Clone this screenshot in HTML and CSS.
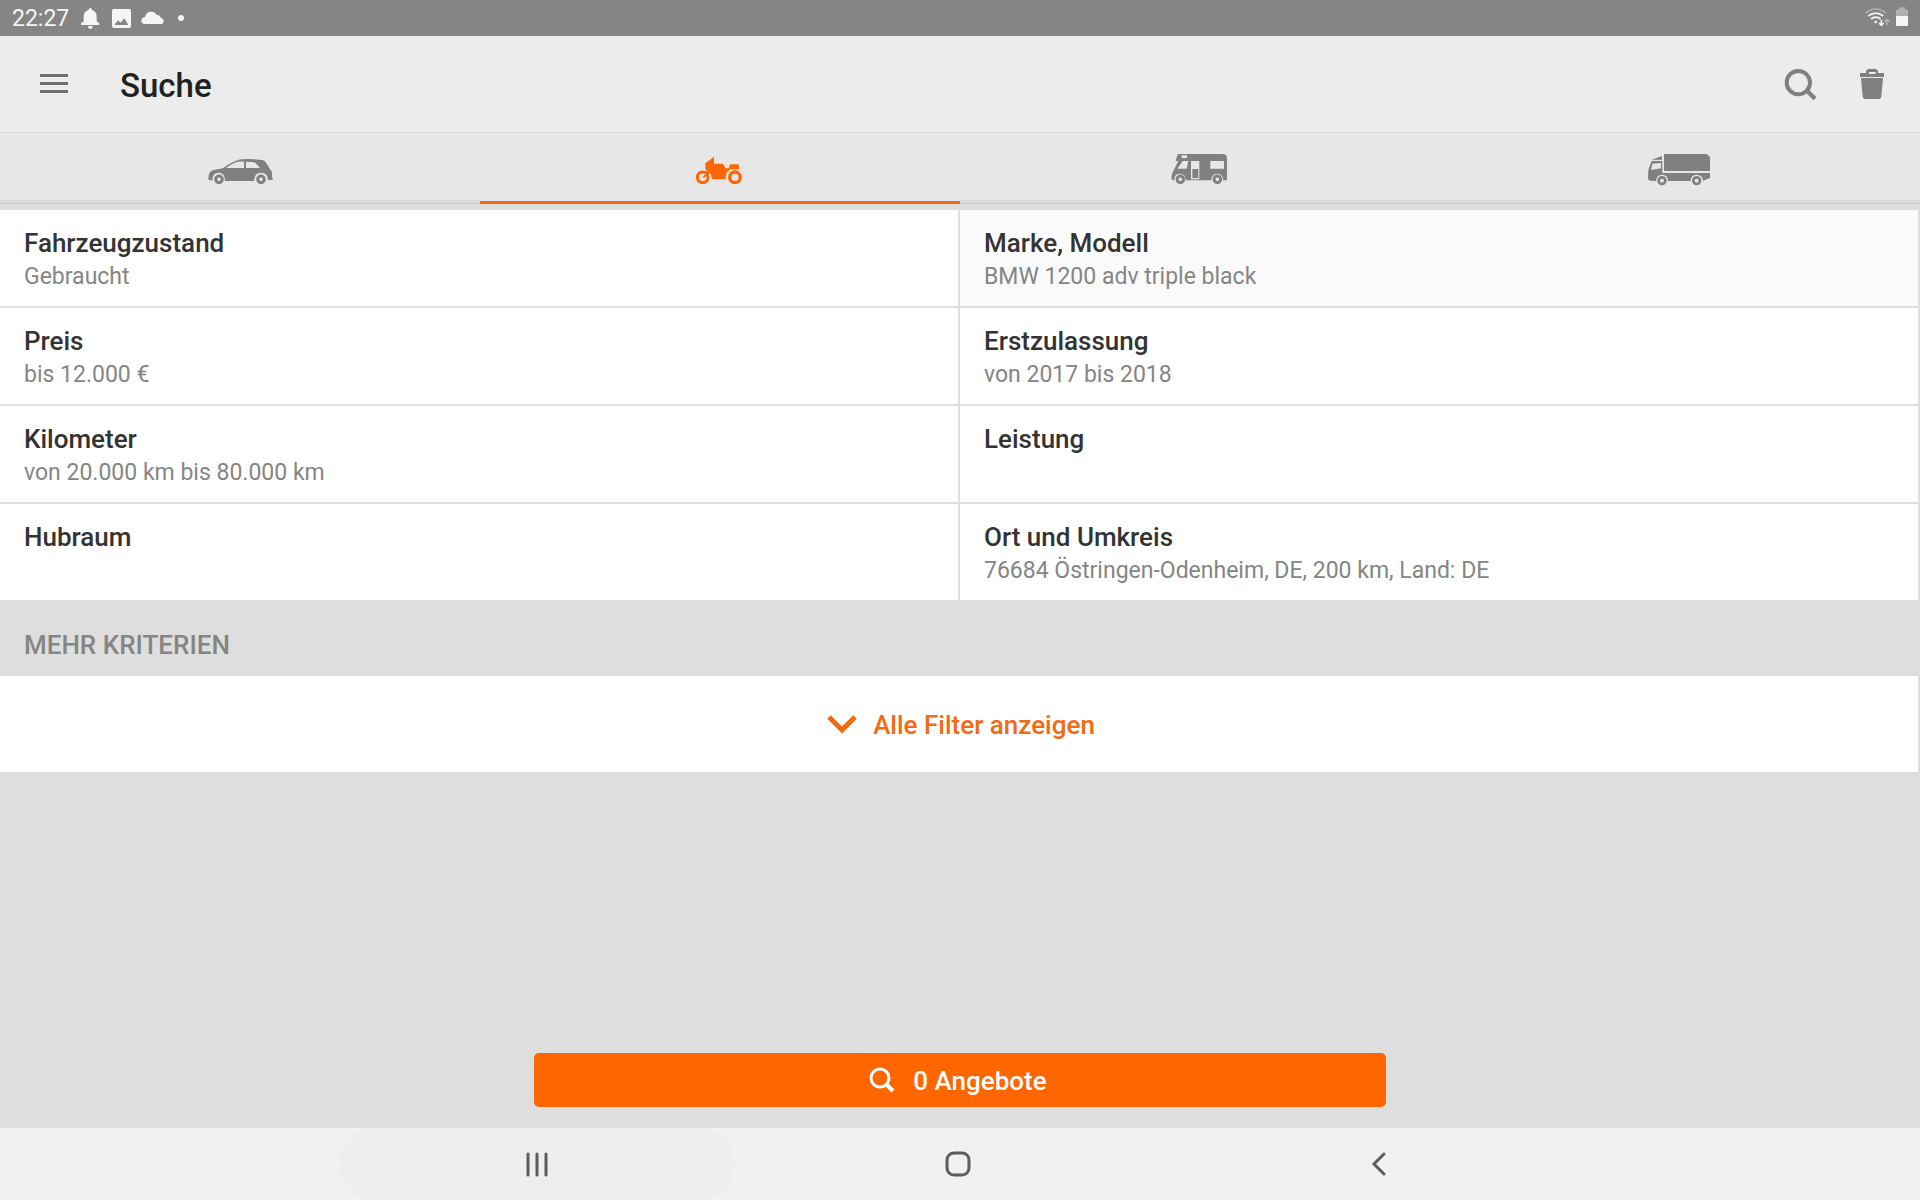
FILE: index.html
```html
<!DOCTYPE html>
<html lang="de">
<head>
    <meta charset="UTF-8">
    <meta name="viewport" content="width=device-width, initial-scale=1.0">
    <title>Suche</title>
    <link rel="stylesheet" href="styles.css">
</head>
<body>
    <div class="statusbar">
        <span class="clock">22:27</span>
        <svg width="20" height="36" viewBox="240 0 60 108">
            <path fill="#f5f5f5" d="M267 29v-2q0-3 4-3t4 3v2q14 4 15 19v16l8 6v5h-55v-5l8-6V48q1-15 16-19zM264 78h14q-1 9-7 9t-7-9z"/>
        </svg>
        <svg width="22" height="36" viewBox="327 0 66 108">
            <rect x="336" y="27" width="57" height="57" rx="6" fill="#f5f5f5"/>
            <path fill="#858585" d="M343 75l11-14 7 7 12-13 12 20z"/>
        </svg>
        <svg width="25" height="36" viewBox="420 0 75 108">
            <path fill="#f5f5f5" d="M434 72q-10-1-10-10 0-9 11-11 4-16 18-16 13 0 17 10 9-2 13 8 8 3 8 10 0 8-8 9z"/>
        </svg>
        <svg width="12" height="36" viewBox="522 0 36 108">
            <circle cx="543" cy="54" r="9" fill="#f5f5f5"/>
        </svg>
        <span class="spacer"></span>
        <svg class="wifi" width="25" height="36" viewBox="375 0 75 108">
            <g fill="none" stroke-width="5">
                <path stroke="#b0b0b0" d="M378 39q29-24 59 0"/>
                <path stroke="#f5f5f5" d="M385 48q22-17 45 0M393 57q14-11 29 0"/>
                <path stroke="#f5f5f5" d="M424 60v15M417 69l7 7 7-7"/>
                <path stroke="#b0b0b0" d="M441 74V58M434 65l7-7 7 7"/>
            </g>
            <circle cx="407" cy="66" r="4" fill="#f5f5f5"/>
        </svg>
        <svg width="14" height="36" viewBox="465 0 42 108">
            <path fill="#b0b0b0" d="M477 22h18v7h9v19h-36V29h9z"/>
            <path fill="#f5f5f5" d="M468 48h36v27q0 3-3 3h-30q-3 0-3-3z"/>
        </svg>
    </div>

    <header class="appbar">
        <button class="icon-btn" aria-label="Menü">
            <svg width="108" height="96" viewBox="0 108 324 288">
                <path fill="#707070" d="M120 222h84v9h-84zM120 246h84v9h-84zM120 270h84v9h-84z"/>
            </svg>
        </button>
        <h1>Suche</h1>
        <button class="icon-btn" aria-label="Suchen">
            <svg width="72" height="96" viewBox="72 108 216 288">
                <g fill="none" stroke="#808080">
                    <circle cx="175" cy="248" r="35" stroke-width="12"/>
                    <path stroke-width="13" d="M199 270l26 26"/>
                </g>
            </svg>
        </button>
        <button class="icon-btn" aria-label="Löschen">
            <svg width="72" height="96" viewBox="288 108 216 288">
                <path fill="#808080" fill-rule="evenodd" d="M360 219h18v-3q0-9 9-9h18q9 0 9 9v3h18v12h-72zM387 222h20v-6h-20zM363 234h66l-5 55q-1 8-9 8h-38q-8 0-9-8z"/>
            </svg>
        </button>
    </header>

    <nav class="tabs" role="tablist">
        <button class="tab" role="tab" aria-label="Auto">
            <svg width="100" height="67" viewBox="0 -21 300 201">
                <path fill="currentColor" fill-rule="evenodd" d="M55 116l2-14q3-11 18-13l23-4q28-20 46-25 10-3 30-3 30 0 46 4 6 2 10 10l12 19q4 3 4 10v12l2 3v4l-14 2q0-23-21-23-20 0-21 25h-87q0-25-19-25-19 0-19 23-12 0-12-5zM108 84h54V65q-19-1-29 4-12 5-25 15zM168 65v19h42l-14-16q-9-3-28-3z"/>
                <circle cx="87" cy="118" r="10" fill="none" stroke="currentColor" stroke-width="9"/>
                <circle cx="213" cy="118" r="10" fill="none" stroke="currentColor" stroke-width="9"/>
            </svg>
        </button>
        <button class="tab active" role="tab" aria-selected="true" aria-label="Motorrad">
            <svg width="100" height="67" viewBox="0 -21 300 201">
                <path fill="currentColor" d="M132 50v21h27l8 14h9l5-12h24q4 8 2 15h-25l-12 9-4 21h-37q-6-4-6-14l-9-9-8-7V70q13-10 26-20z"/>
                <path fill="none" stroke="currentColor" stroke-width="6" d="M107 94l7 6-14 12"/>
                <circle cx="98" cy="112" r="16" fill="none" stroke="currentColor" stroke-width="9"/>
                <circle cx="195" cy="112" r="16" fill="none" stroke="currentColor" stroke-width="10"/>
            </svg>
        </button>
        <button class="tab" role="tab" aria-label="Wohnmobil">
            <svg width="100" height="67" viewBox="0 -21 300 201">
                <path fill="currentColor" fill-rule="evenodd" d="M88 42h130q13 0 13 13v66h-12q0-20-17-20-18 0-18 20h-77q0-20-17-20-17 0-17 17l-2 4-7-5 2-16 19-38h-8l5-17q1-4 6-4zM95 46v8h16v-8zM98 63L82 86h28l5-23zM123 63v55h25V63zM181 63v23h41V63z"/>
                <path fill="currentColor" d="M127 87h18v27h-18z"/>
                <circle cx="91" cy="118" r="10" fill="none" stroke="currentColor" stroke-width="9"/>
                <circle cx="202" cy="118" r="10" fill="none" stroke="currentColor" stroke-width="9"/>
            </svg>
        </button>
        <button class="tab" role="tab" aria-label="LKW">
            <svg width="100" height="67" viewBox="0 -21 300 201">
                <path fill="currentColor" d="M102 42h128l10 9v42H102zM65 59l31-11v11z"/>
                <path fill="currentColor" fill-rule="evenodd" d="M65 63h32v36h143v15l-21 8q-2-18-19-18-17 0-18 19h-68q-1-19-18-19-16 0-18 19l-18-1q-6-2-6-8l1-24zM67 71l-4 19 30-5V69z"/>
                <circle cx="96" cy="122" r="10" fill="none" stroke="currentColor" stroke-width="8"/>
                <circle cx="200" cy="122" r="10" fill="none" stroke="currentColor" stroke-width="8"/>
            </svg>
        </button>
    </nav>

    <main>
        <div class="criteria">
            <button class="cell">
                <span class="name">Fahrzeugzustand</span>
                <span class="value">Gebraucht</span>
            </button>
            <button class="cell highlighted">
                <span class="name">Marke, Modell</span>
                <span class="value">BMW 1200 adv triple black</span>
            </button>
            <button class="cell">
                <span class="name">Preis</span>
                <span class="value">bis 12.000 €</span>
            </button>
            <button class="cell">
                <span class="name">Erstzulassung</span>
                <span class="value">von 2017 bis 2018</span>
            </button>
            <button class="cell">
                <span class="name">Kilometer</span>
                <span class="value">von 20.000 km bis 80.000 km</span>
            </button>
            <button class="cell">
                <span class="name">Leistung</span>
            </button>
            <button class="cell">
                <span class="name">Hubraum</span>
            </button>
            <button class="cell">
                <span class="name">Ort und Umkreis</span>
                <span class="value">76684 Östringen-Odenheim, DE, 200 km, Land: DE</span>
            </button>
        </div>

        <h2>MEHR KRITERIEN</h2>
        <button class="all-filters">
            <svg width="30" height="20" viewBox="0 0 30 20">
                <path fill="none" stroke="#f26a12" stroke-width="5" d="M2 2l13 13L28 2"/>
            </svg>
            Alle Filter anzeigen
        </button>
    </main>

    <div class="footer">
        <button class="results">
            <svg width="26" height="28" viewBox="0 0 26 28">
                <g fill="none" stroke="#fff">
                    <circle cx="11" cy="11" r="9" stroke-width="3"/>
                    <path stroke-width="4" d="M17 17l7 7"/>
                </g>
            </svg>
            0 Angebote
        </button>
    </div>

    <div class="navbar">
        <button class="key pressed" aria-label="Letzte Apps">
            <svg width="24" height="26" viewBox="0 0 24 26">
                <path stroke="#5c5c5c" stroke-width="3" stroke-linecap="round" d="M3 3v21M12 3v21M21 3v21"/>
            </svg>
        </button>
        <button class="key" aria-label="Startseite">
            <svg width="26" height="26" viewBox="0 0 26 26">
                <rect x="2" y="2" width="22" height="22" rx="7" fill="none" stroke="#5c5c5c" stroke-width="3"/>
            </svg>
        </button>
        <button class="key" aria-label="Zurück">
            <svg width="16" height="26" viewBox="0 0 16 26">
                <path fill="none" stroke="#5c5c5c" stroke-width="3" stroke-linecap="round" d="M13 3L3 13l10 10"/>
            </svg>
        </button>
    </div>
</body>
</html>
```
FILE: styles.css
```css
* {
    box-sizing: border-box;
}
body {
    margin: 0;
    min-height: 100vh;
    display: flex;
    flex-direction: column;
    font-family: Roboto, "Liberation Sans", sans-serif;
    background-color: #dedede;
}
button {
    margin: 0;
    padding: 0;
    border: none;
    background: none;
    font-family: inherit;
    cursor: pointer;
}
svg {
    display: block;
    flex: none;
}

/* Android status bar */
.statusbar {
    display: flex;
    align-items: center;
    gap: 9px;
    height: 36px;
    padding: 0 11px 0 12px;
    background-color: #858585;
}
.clock {
    width: 59px;
    padding-top: 2px;
    font-size: 23px;
    line-height: 34px;
    color: #f5f5f5;
}
.spacer {
    flex: 1;
}
.wifi {
    margin-right: -4px;
}

.appbar {
    display: flex;
    align-items: center;
    height: 97px;
    padding-right: 12px;
    background-color: #ececec;
    border-bottom: 1px solid #dadada;
}
.appbar h1 {
    flex: 1;
    margin: 0;
    padding: 4px 0 0 12px;
    font-size: 33px;
    line-height: 40px;
    font-weight: 500;
    color: #212121;
}

.tabs {
    display: grid;
    grid-template-columns: repeat(4, 1fr);
    background-color: #e7e7e7;
    border-bottom: 6px solid #dedede;
}
.tab {
    display: flex;
    justify-content: center;
    height: 71px;
    color: #808080;
    border-bottom: 1px solid #c8c8c8;
    box-shadow: inset 0 -3px #dcdcdc;
}
.tab.active {
    color: #ff6600;
    border-bottom: 3px solid #f26a12;
    box-shadow: none;
}

.criteria {
    display: grid;
    grid-template-columns: 1fr 1fr;
    row-gap: 2px;
}
.cell {
    display: flex;
    flex-direction: column;
    height: 96px;
    padding: 16px 24px;
    text-align: left;
    background-color: #fff;
    border-right: 2px solid #dedede;
}
.highlighted {
    background-color: #fafafa;
}
.name {
    font-size: 26px;
    line-height: 34px;
    font-weight: 500;
    color: #333;
}
.value {
    font-size: 23px;
    line-height: 34px;
    color: #858585;
}

h2 {
    margin: 0;
    padding: 28px 24px 14px;
    font-size: 26px;
    line-height: 34px;
    font-weight: 500;
    color: #858585;
}
.all-filters {
    display: flex;
    align-items: center;
    justify-content: center;
    gap: 16px;
    width: 100%;
    height: 96px;
    padding: 2px 0 0 4px;
    font-size: 26px;
    font-weight: 500;
    color: #f26a12;
    background-color: #fff;
    border-right: 2px solid #dedede;
}

.footer {
    display: flex;
    justify-content: center;
    margin-top: auto;
    padding: 21px 24px;
}
.results {
    display: flex;
    align-items: center;
    justify-content: center;
    gap: 18px;
    width: 100%;
    max-width: 852px;
    height: 54px;
    padding: 2px 4px 0 0;
    font-size: 26px;
    font-weight: 500;
    color: #fff;
    background-color: #ff6600;
    border-radius: 5px;
}

.navbar {
    display: flex;
    justify-content: center;
    gap: 25px;
    padding-right: 4px;
    background-color: #f1f1f1;
}
.key {
    display: flex;
    align-items: center;
    justify-content: center;
    width: 396px;
    height: 72px;
    border-radius: 36px;
}
.pressed {
    background-color: #eee;
}
```
